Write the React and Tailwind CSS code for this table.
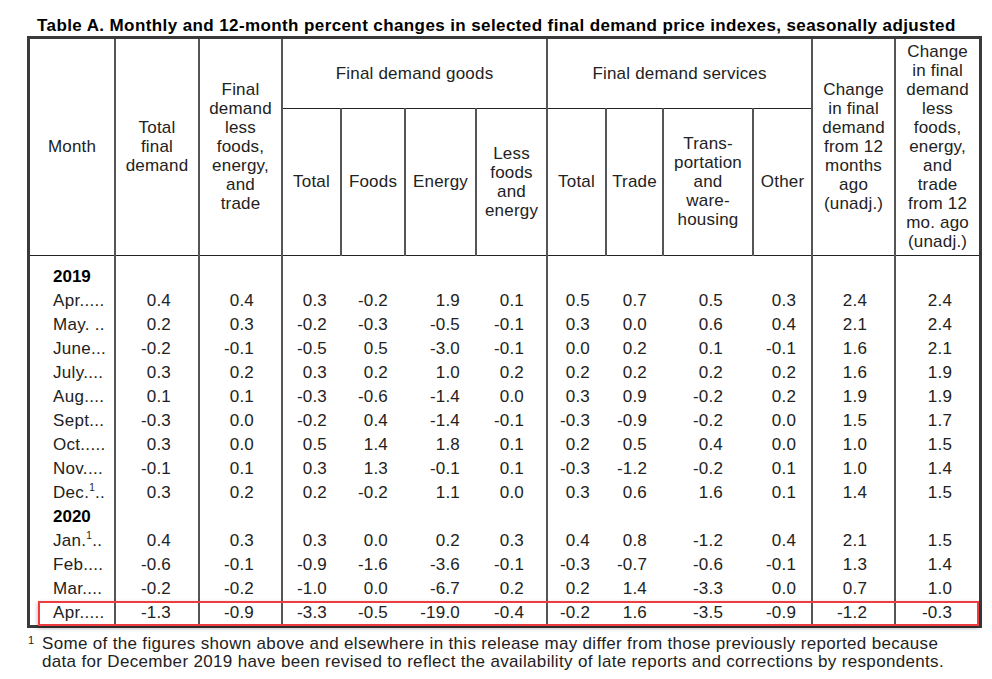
import React from "react";

const rows = [
  { year: "2019" },
  { m: "Apr.....", v: ["0.4","0.4","0.3","-0.2","1.9","0.1","0.5","0.7","0.5","0.3","2.4","2.4"] },
  { m: "May. ..", v: ["0.2","0.3","-0.2","-0.3","-0.5","-0.1","0.3","0.0","0.6","0.4","2.1","2.4"] },
  { m: "June...", v: ["-0.2","-0.1","-0.5","0.5","-3.0","-0.1","0.0","0.2","0.1","-0.1","1.6","2.1"] },
  { m: "July....", v: ["0.3","0.2","0.3","0.2","1.0","0.2","0.2","0.2","0.2","0.2","1.6","1.9"] },
  { m: "Aug....", v: ["0.1","0.1","-0.3","-0.6","-1.4","0.0","0.3","0.9","-0.2","0.2","1.9","1.9"] },
  { m: "Sept...", v: ["-0.3","0.0","-0.2","0.4","-1.4","-0.1","-0.3","-0.9","-0.2","0.0","1.5","1.7"] },
  { m: "Oct.....", v: ["0.3","0.0","0.5","1.4","1.8","0.1","0.2","0.5","0.4","0.0","1.0","1.5"] },
  { m: "Nov....", v: ["-0.1","0.1","0.3","1.3","-0.1","0.1","-0.3","-1.2","-0.2","0.1","1.0","1.4"] },
  { m: "Dec.", sup: true, tail: "..", v: ["0.3","0.2","0.2","-0.2","1.1","0.0","0.3","0.6","1.6","0.1","1.4","1.5"] },
  { year: "2020" },
  { m: "Jan.", sup: true, tail: "..", v: ["0.4","0.3","0.3","0.0","0.2","0.3","0.4","0.8","-1.2","0.4","2.1","1.5"] },
  { m: "Feb....", v: ["-0.6","-0.1","-0.9","-1.6","-3.6","-0.1","-0.3","-0.7","-0.6","-0.1","1.3","1.4"] },
  { m: "Mar....", v: ["-0.2","-0.2","-1.0","0.0","-6.7","0.2","0.2","1.4","-3.3","0.0","0.7","1.0"] },
  { m: "Apr.....", v: ["-1.3","-0.9","-3.3","-0.5","-19.0","-0.4","-0.2","1.6","-3.5","-0.9","-1.2","-0.3"] },
];

// per value column: right padding and whether a vertical line follows
const valCls = [
  "pr-[27px] border-r-2 border-r-[#555]",
  "pr-[27px] border-r-2 border-r-[#555]",
  "pr-[14px]",
  "pr-[17px]",
  "pr-[16px]",
  "pr-[22px] border-r-2 border-r-[#555]",
  "pr-[16px]",
  "pr-[16px]",
  "pr-[30px]",
  "pr-[15px] border-r-2 border-r-[#555]",
  "pr-[27px] border-r-2 border-r-[#555]",
  "pr-[27px]",
];

function Lines({ lines }) {
  return (
    <div className="flex flex-col items-center leading-[19px] tracking-[0.2px]">
      {lines.map((l, i) => (
        <span key={i}>{l}</span>
      ))}
    </div>
  );
}

const vline = "border-r-2 border-r-[#555]";

export default function App() {
  return (
    <div className="w-[992px] h-[679px] bg-white text-[#222] font-['Liberation_Sans',Arial,Helvetica,sans-serif] overflow-hidden">
      <div className="pt-[15px] pl-[37px] h-[36px] leading-[21px] text-[17px] tracking-[0.4px] font-bold text-black whitespace-nowrap">
        Table A. Monthly and 12-month percent changes in selected final demand price indexes, seasonally adjusted
      </div>
      <div className="relative ml-[27px] w-[955px] border-[3px] border-[#3a3a3a]">
        <table className="table-fixed w-full border-collapse text-[17px]">
          <colgroup>
            <col className="w-[85px]" />
            <col className="w-[84px]" />
            <col className="w-[83px]" />
            <col className="w-[59px]" />
            <col className="w-[64px]" />
            <col className="w-[71px]" />
            <col className="w-[71px]" />
            <col className="w-[59px]" />
            <col className="w-[57px]" />
            <col className="w-[90px]" />
            <col className="w-[59px]" />
            <col className="w-[83px]" />
            <col className="w-[84px]" />
          </colgroup>
          <thead>
            <tr className="h-[69px]">
              <th rowSpan={2} className={`font-normal align-middle border-b border-b-[#222] ${vline}`}>
                <Lines lines={["Month"]} />
              </th>
              <th rowSpan={2} className={`font-normal align-middle border-b border-b-[#222] ${vline}`}>
                <Lines lines={["Total", "final", "demand"]} />
              </th>
              <th rowSpan={2} className={`font-normal align-middle border-b border-b-[#222] ${vline}`}>
                <Lines lines={["Final", "demand", "less", "foods,", "energy,", "and", "trade"]} />
              </th>
              <th colSpan={4} className={`font-normal align-middle border-b border-b-[#222] ${vline}`}>
                <Lines lines={["Final demand goods"]} />
              </th>
              <th colSpan={4} className={`font-normal align-middle border-b border-b-[#222] ${vline}`}>
                <Lines lines={["Final demand services"]} />
              </th>
              <th rowSpan={2} className={`font-normal align-middle border-b border-b-[#222] ${vline}`}>
                <Lines lines={["Change", "in final", "demand", "from 12", "months", "ago", "(unadj.)"]} />
              </th>
              <th rowSpan={2} className="font-normal align-middle border-b border-b-[#222]">
                <Lines lines={["Change", "in final", "demand", "less", "foods,", "energy,", "and", "trade", "from 12", "mo. ago", "(unadj.)"]} />
              </th>
            </tr>
            <tr className="h-[147px]">
              <th className={`font-normal border-b border-b-[#222] ${vline}`}><Lines lines={["Total"]} /></th>
              <th className={`font-normal border-b border-b-[#222] ${vline}`}><Lines lines={["Foods"]} /></th>
              <th className={`font-normal border-b border-b-[#222] ${vline}`}><Lines lines={["Energy"]} /></th>
              <th className={`font-normal border-b border-b-[#222] ${vline}`}><Lines lines={["Less", "foods", "and", "energy"]} /></th>
              <th className={`font-normal border-b border-b-[#222] ${vline}`}><Lines lines={["Total"]} /></th>
              <th className={`font-normal border-b border-b-[#222] ${vline}`}><Lines lines={["Trade"]} /></th>
              <th className={`font-normal border-b border-b-[#222] ${vline}`}><Lines lines={["Trans-", "portation", "and", "ware-", "housing"]} /></th>
              <th className={`font-normal border-b border-b-[#222] ${vline}`}><Lines lines={["Other"]} /></th>
            </tr>
          </thead>
          <tbody>
            <tr className="h-[10px]">
              <td className={vline}></td>
              {valCls.map((c, i) => (
                <td key={i} className={c}></td>
              ))}
            </tr>
            {rows.map((r, idx) =>
              r.year ? (
                <tr key={idx} className="h-[24px]">
                  <td className={`pl-[23px] font-bold text-black leading-[24px] ${vline}`}>{r.year}</td>
                  {valCls.map((c, i) => (
                    <td key={i} className={c}></td>
                  ))}
                </tr>
              ) : (
                <tr key={idx} className="h-[24px]">
                  <td className={`pl-[23px] whitespace-nowrap leading-[24px] tracking-[0.3px] ${vline}`}>
                    {r.m}
                    {r.sup && <sup className="text-[10px] top-[-7px]">1</sup>}
                    {r.tail}
                  </td>
                  {r.v.map((v, i) => (
                    <td key={i} className={`text-right whitespace-nowrap leading-[24px] tracking-[0.2px] ${valCls[i]}`}>
                      {v}
                    </td>
                  ))}
                </tr>
              )
            )}
          </tbody>
        </table>
        <div className="absolute left-[8px] bottom-[-1px] w-[941px] h-[25px] border-2 border-[#ee3c3f] shadow-[0_2px_4px_rgba(0,0,0,0.35)] pointer-events-none"></div>
      </div>
      <div className="flex pl-[28px] pt-[7px] text-[17px] leading-[18px] text-[#222]">
        <span className="w-[14px] text-[11px] leading-[11px]">1</span>
        <div className="tracking-[0.33px]">
          <div>Some of the figures shown above and elsewhere in this release may differ from those previously reported because</div>
          <div>data for December 2019 have been revised to reflect the availability of late reports and corrections by respondents.</div>
        </div>
      </div>
    </div>
  );
}
